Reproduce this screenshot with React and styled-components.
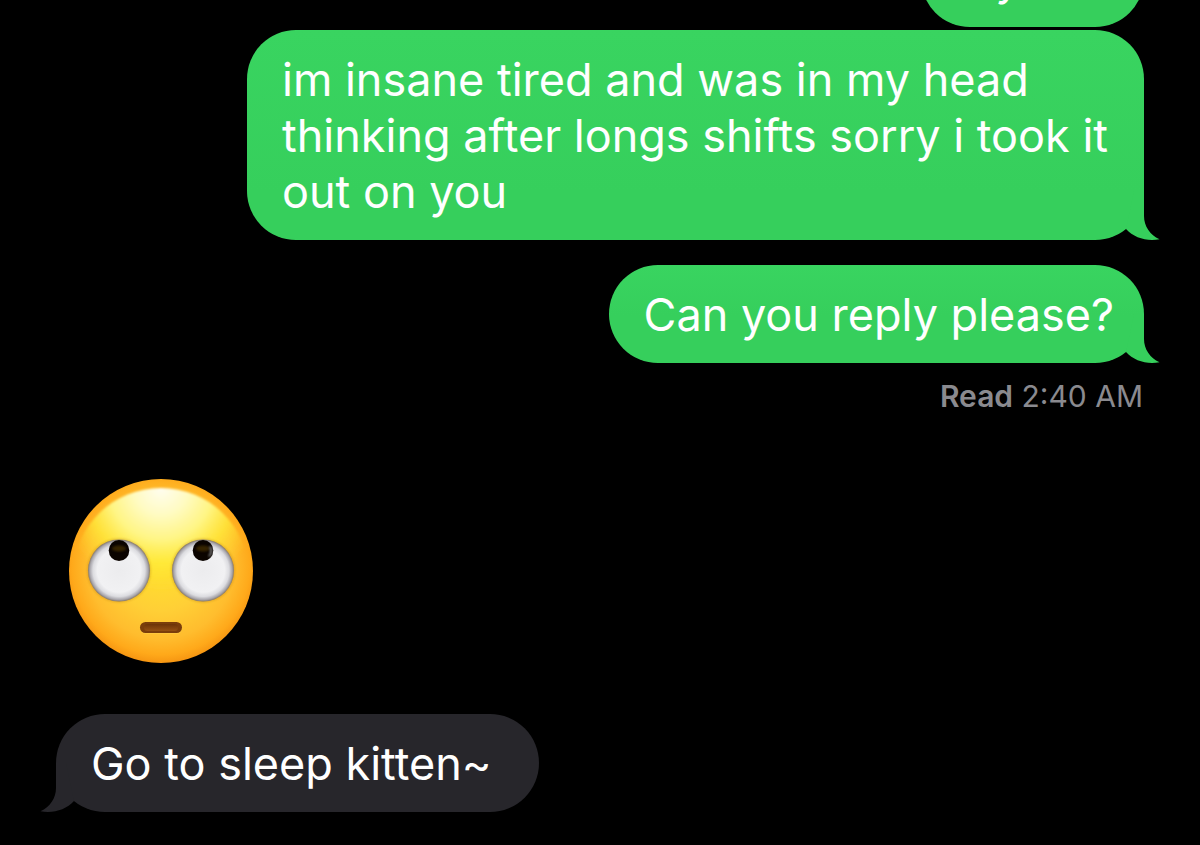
import React from 'react';
import styled, { createGlobalStyle } from 'styled-components';

const GlobalStyle = createGlobalStyle`
  *, *::before, *::after {
    box-sizing: border-box;
  }

  body {
    margin: 0;
    background: #000;
    font-family: Inter, "Liberation Sans", sans-serif;
  }
`;

// newest message sits at the bottom, older ones run off the top
const Thread = styled.main`
  height: 100vh;
  padding: 0 56px 33px;
  display: flex;
  flex-direction: column;
  justify-content: flex-end;
  overflow: hidden;
  background: #000;
`;

const Row = styled.div`
  display: flex;
  flex-shrink: 0;
  justify-content: ${props => props.$sent ? 'flex-end' : 'flex-start'};
  margin-bottom: ${props => props.$gap || 0}px;
`;

const Bubble = styled.div`
  position: relative;
  max-width: min(897px, 100%);
  padding: ${props => props.$sent ? '22px 30px 20px 35px' : '22px 47px 20px 35px'};
  border-radius: 49px;
  background: ${props => props.$sent ? 'linear-gradient(#39d460, #36cf5c calc(100% - 48px))' : '#27262b'};
  color: #fff;
  font-size: 45px;
  line-height: 56px;
`;

const Text = styled.p`
  margin: 0;
`;

const TailSvg = styled.svg`
  position: absolute;
  bottom: 0;
  width: 50px;
  height: 50px;
  ${props => props.$sent ? 'right: -16px;' : 'left: -16px; transform: scaleX(-1);'}
`;

const Receipt = styled.div`
  flex-shrink: 0;
  margin: 15px 0 64px;
  padding-right: 1px;
  color: #8a8a8f;
  font-size: 30px;
  line-height: 36px;
  text-align: right;

  strong {
    font-weight: 600;
  }
`;

const EmojiSvg = styled.svg`
  width: 186px;
  height: 186px;
  margin-left: 12px;
`;

const Tail = ({ sent }) => (
  <TailSvg $sent={sent} viewBox="0 0 50 50" aria-hidden="true">
    <path
      d="M24 1H34V26C34 36 40 45 49.500 49.200C37 51.500 24 48 16 39Z"
      fill={sent ? '#36cf5c' : '#27262b'}
    />
  </TailSvg>
);

const Message = ({ sent, tail, gap, children }) => (
  <Row $sent={sent} $gap={gap}>
    <Bubble $sent={sent}>
      {tail && <Tail sent={sent} />}
      <Text>{children}</Text>
    </Bubble>
  </Row>
);

const Eye = ({ x, glint }) => (
  <g transform={`translate(${x} 92.500)`}>
    <circle r="32" fill="#a86c10" opacity="0.3" filter="url(#soft)" />
    <circle r="31" fill="url(#eye)" />
    <ellipse cx="0" cy="-20" rx="10.300" ry="10.500" fill="#0b0400" />
    <ellipse cx="0" cy="-22" rx="7" ry="3" fill="#4a3204" opacity="0.7" filter="url(#soft)" />
    {glint && <path d="M7 -24Q10 -19 6 -14" stroke="#777" strokeWidth="2" fill="none" filter="url(#soft)" />}
  </g>
);

const RollingEyes = () => (
  <EmojiSvg viewBox="0 0 186 186" role="img" aria-label="Face with rolling eyes">
    <defs>
      <radialGradient id="face" cx="0.5" cy="0.47" r="0.55">
        <stop offset="0" stopColor="#ffe22e" />
        <stop offset="0.45" stopColor="#ffcf36" />
        <stop offset="0.72" stopColor="#ffbd2e" />
        <stop offset="0.88" stopColor="#ffa91a" />
        <stop offset="1" stopColor="#f28d0e" />
      </radialGradient>
      <radialGradient id="shine" gradientUnits="userSpaceOnUse" cx="93" cy="10" r="104">
        <stop offset="0" stopColor="#fffef0" />
        <stop offset="0.25" stopColor="#fffbc4" />
        <stop offset="0.5" stopColor="#fff584" />
        <stop offset="0.72" stopColor="#ffec3c" stopOpacity="0.75" />
        <stop offset="1" stopColor="#ffdc2c" stopOpacity="0" />
      </radialGradient>
      <radialGradient id="eye" cx="0.5" cy="0.5" r="0.5">
        <stop offset="0" stopColor="#ececee" />
        <stop offset="0.7" stopColor="#f1f1f3" />
        <stop offset="0.84" stopColor="#dcdce0" />
        <stop offset="0.94" stopColor="#a9a7ad" />
        <stop offset="1" stopColor="#85786a" />
      </radialGradient>
      <linearGradient id="mouth" x1="0" y1="0" x2="0" y2="1">
        <stop offset="0" stopColor="#6c3308" />
        <stop offset="1" stopColor="#945012" />
      </linearGradient>
      <filter id="soft" x="-50%" y="-50%" width="200%" height="200%">
        <feGaussianBlur stdDeviation="1" />
      </filter>
    </defs>
    <circle cx="93" cy="93" r="92" fill="url(#face)" />
    <ellipse cx="93" cy="95" rx="87" ry="85" fill="url(#shine)" filter="url(#soft)" />
    <Eye x={51} />
    <Eye x={135} glint />
    <rect x="72" y="145" width="42" height="11" rx="5.500" fill="#ffd04a" opacity="0.5" />
    <rect x="72" y="144" width="42" height="11" rx="5.500" fill="#7a3d0b" />
    <rect x="76" y="146" width="34" height="7" rx="3.500" fill="url(#mouth)" />
  </EmojiSvg>
);

const App = () => {
  return (
    <>
      <GlobalStyle />
      <Thread>
        <Message sent gap={3}>my bad</Message>
        <Message sent tail gap={25}>
          im insane tired and was in my head thinking after longs shifts sorry i took it out on you
        </Message>
        <Message sent tail>Can you reply please?</Message>
        <Receipt>
          <strong>Read</strong> 2:40 AM
        </Receipt>
        <Row $gap={50}>
          <RollingEyes />
        </Row>
        <Message tail>Go to sleep kitten~</Message>
      </Thread>
    </>
  );
};

export default App;
